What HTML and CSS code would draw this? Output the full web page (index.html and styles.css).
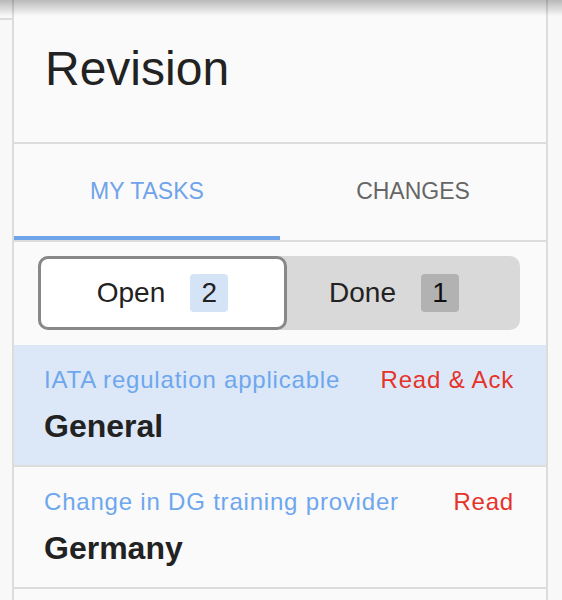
FILE: index.html
```html
<!DOCTYPE html>
<html>
<head>
    <link rel="stylesheet" href="styles.css">
</head>
<body>
    <div class="shell">
        <div class="side side-left">
            <div class="side-top"></div>
        </div>

        <main class="panel">
            <header class="panel-header">
                <h1>Revision</h1>
            </header>

            <nav class="tabs">
                <button class="tab active">My tasks</button>
                <button class="tab">Changes</button>
            </nav>

            <div class="filter">
                <div class="segmented">
                    <button class="segment selected">Open <span class="count count-open">2</span></button>
                    <button class="segment">Done <span class="count count-done">1</span></button>
                </div>
            </div>

            <ul class="task-list">
                <li class="task highlighted">
                    <div class="task-row">
                        <span class="task-title">IATA regulation applicable</span>
                        <span class="task-action">Read &amp; Ack</span>
                    </div>
                    <div class="task-area">General</div>
                </li>
                <li class="task">
                    <div class="task-row">
                        <span class="task-title">Change in DG training provider</span>
                        <span class="task-action">Read</span>
                    </div>
                    <div class="task-area">Germany</div>
                </li>
            </ul>
        </main>

        <div class="side side-right"></div>
    </div>

    <div class="top-shadow"></div>
</body>
</html>
```

FILE: styles.css
```css
body {
    margin: 0;
    padding: 0;
    font-family: "Liberation Sans", Arial, sans-serif;
    background: #f7f7f7;
    height: 100vh;
    overflow: hidden;
}

.shell {
    display: grid;
    grid-template-columns: 12px 1fr 14px;
    height: 100vh;
}

.side {
    background: #f8f8f8;
}

.side-top {
    height: 18px;
    border-bottom: 2px solid #dcdcdc;
}

.panel {
    background: #fafafa;
    border-left: 2px solid #dcdcdc;
    border-right: 2px solid #dcdcdc;
}

.panel-header {
    height: 144px;
    box-sizing: border-box;
    padding: 45px 0 0 31px;
    border-bottom: 2px solid #dcdcdc;
}

.panel-header h1 {
    margin: 0;
    font-size: 48px;
    font-weight: normal;
    line-height: 48px;
    color: #222;
}

.tabs {
    display: flex;
    border-bottom: 2px solid #dcdcdc;
}

.tab {
    flex: 1;
    height: 96px;
    box-sizing: border-box;
    border: none;
    border-bottom: 4px solid transparent;
    background: none;
    font-family: inherit;
    font-size: 23px;
    text-transform: uppercase;
    color: #666;
    padding: 2px 0 0;
    cursor: pointer;
}

.tab.active {
    color: #6fa3ea;
    border-bottom-color: #6fa3ea;
}

.filter {
    padding: 14px 26px 15px 24px;
}

.segmented {
    display: flex;
    height: 74px;
    background: #d9d9d9;
    border-radius: 10px;
}

.segment {
    display: flex;
    align-items: center;
    justify-content: center;
    border: none;
    background: none;
    font-family: inherit;
    font-size: 28px;
    color: #222;
    padding: 0;
    cursor: pointer;
}

.segment.selected {
    width: 249px;
    box-sizing: border-box;
    background: #fff;
    border: 3px solid #888;
    border-radius: 10px;
}

.segment:not(.selected) {
    flex: 1;
    padding-right: 19px;
}

.count {
    width: 38px;
    height: 38px;
    line-height: 38px;
    margin-left: 25px;
    border-radius: 4px;
    text-align: center;
}

.count-open {
    background: #d5e3f6;
}

.count-done {
    background: #b2b2b2;
    color: #111;
}

.task-list {
    list-style: none;
    margin: 0;
    padding: 0;
}

.task {
    padding: 21px 32px 21px 30px;
    border-bottom: 2px solid #dcdcdc;
}

.task.highlighted {
    background: #dce8f8;
}

.task-row {
    display: flex;
    justify-content: space-between;
    font-size: 24px;
    line-height: 28px;
    letter-spacing: 0.8px;
}

.task-title {
    color: #6ea7ee;
}

.task-action {
    color: #e5332a;
}

.task-area {
    margin-top: 14px;
    font-size: 32px;
    font-weight: bold;
    line-height: 36px;
    color: #222;
}

.top-shadow {
    position: fixed;
    top: 0;
    left: 0;
    right: 0;
    height: 16px;
    background: linear-gradient(rgba(0, 0, 0, 0.26), rgba(0, 0, 0, 0));
    pointer-events: none;
}
```
